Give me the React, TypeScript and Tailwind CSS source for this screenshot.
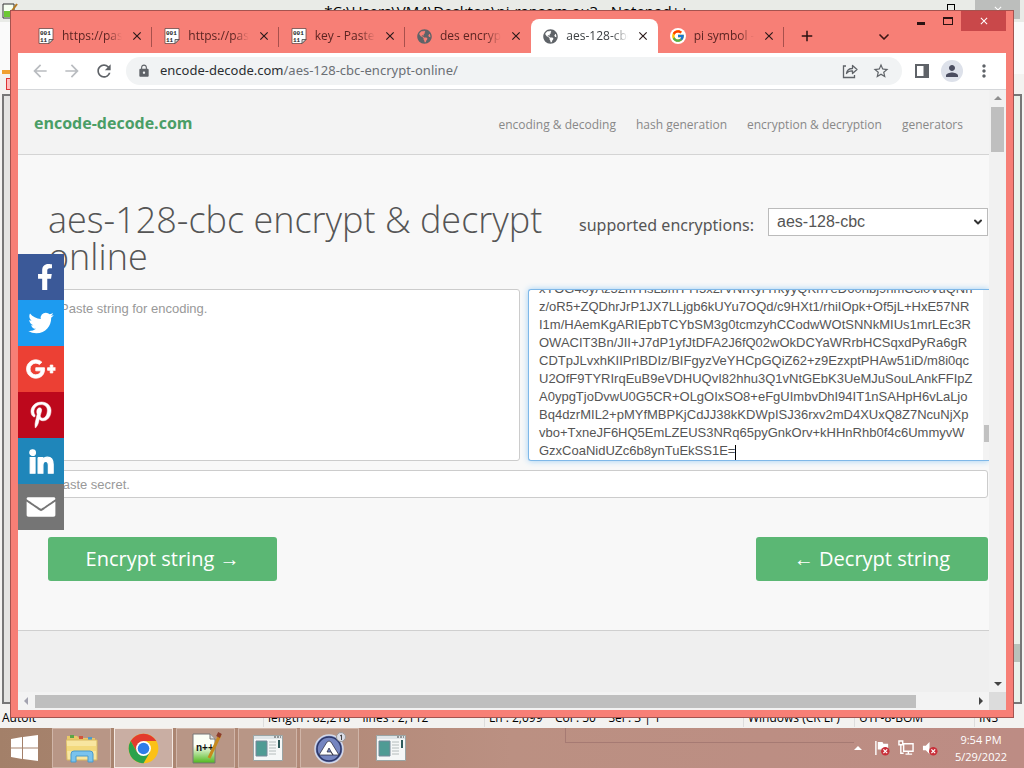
import { useEffect, useRef } from "react";
import type { ReactNode } from "react";
import { FaFacebookF, FaGlobeAmericas } from "react-icons/fa";
import { FcGoogle } from "react-icons/fc";
import { MdArrowBack, MdArrowForward, MdRefresh, MdLock, MdStarBorder, MdPerson, MdMoreVert, MdClose, MdAdd } from "react-icons/md";
import { ChevronDown } from "lucide-react";

const cipherText = [
    "xYOG40yAz52mYisLbmTYI5x2rVNrKyrTrkyyQKn7eD60nbj9nmCcl0VuQNn",
    "z/oR5+ZQDhrJrP1JX7LLjgb6kUYu7OQd/c9HXt1/rhiIOpk+Of5jL+HxE57NR",
    "I1m/HAemKgARIEpbTCYbSM3g0tcmzyhCCodwWOtSNNkMIUs1mrLEc3R",
    "OWACIT3Bn/JII+J7dP1yfJtDFA2J6fQ02wOkDCYaWRrbHCSqxdPyRa6gR",
    "CDTpJLvxhKIIPrIBDIz/BIFgyzVeYHCpGQiZ62+z9EzxptPHAw51iD/m8i0qc",
    "U2OfF9TYRIrqEuB9eVDHUQvI82hhu3Q1vNtGEbK3UeMJuSouLAnkFFIpZ",
    "A0ypgTjoDvwU0G5CR+OLgOIxSO8+eFgUImbvDhI94IT1nSAHpH6vLaLjo",
    "Bq4dzrMIL2+pMYfMBPKjCdJJ38kKDWpISJ36rxv2mD4XUxQ8Z7NcuNjXp",
    "vbo+TxneJF6HQ5EmLZEUS3NRq65pyGnkOrv+kHHnRhb0f4c6UmmyvW",
    "GzxCoaNidUZc6b8ynTuEkSS1E=",
].join("\n");

function BinaryIcon() {
    return (
        <svg viewBox="0 0 16 16" className="size-4 shrink-0">
            <path d="M1 .5h14v11l-4 4H1z" fill="#fff" stroke="#6b4a48" strokeWidth=".8" />
            <path d="M11 15.5v-4h4z" fill="#ddd" stroke="#444" strokeWidth=".8" />
            <text x="2" y="7" fontSize="6" fontWeight="bold" fontFamily="Liberation Mono, monospace" fill="#222">001</text>
            <text x="2" y="14" fontSize="6" fontWeight="bold" fontFamily="Liberation Mono, monospace" fill="#222">11</text>
        </svg>
    );
}

const globe = <FaGlobeAmericas className="size-[15px] shrink-0 text-[#5f6368]" />;

const tabs = [
    { title: "https://pastebin.com", icon: <BinaryIcon />, line: true },
    { title: "https://pastebin.com", icon: <BinaryIcon />, line: true },
    { title: "key - Pastebin.com", icon: <BinaryIcon />, line: true },
    { title: "des encrypt & decrypt", icon: globe },
    { title: "aes-128-cbc encrypt", icon: globe, active: true },
    {
        title: "pi symbol - Google",
        icon: (
            <span className="shrink-0 rounded-full bg-white p-px">
                <FcGoogle className="size-[14px]" />
            </span>
        ),
        line: true,
    },
];

function TabStrip() {
    return (
        <div className="flex h-[42px] shrink-0 items-end">
            <div className="ml-2 flex h-[34px] min-w-0 w-[758px]">
                {tabs.map((tab, i) => (
                    <div
                        key={i}
                        className={`relative flex min-w-0 flex-1 items-center pl-3 pr-2 ${tab.active ? "rounded-t-lg bg-white text-[#3c4043]" : "text-[#5c2422]"}`}
                    >
                        {tab.icon}
                        <span className="ml-2 flex-1 overflow-hidden whitespace-nowrap text-xs [mask-image:linear-gradient(to_right,black_75%,transparent)]">
                            {tab.title}
                        </span>
                        <button aria-label="Close tab" className="ml-2 text-[#2b1a1a]">
                            <MdClose className="size-[14px]" />
                        </button>
                        {tab.line && <span className="absolute right-0 top-2 h-5 w-px bg-[#a8504c]" />}
                    </div>
                ))}
            </div>
            <button aria-label="New tab" className="mb-2 ml-[14px] text-[#2b1212]">
                <MdAdd className="size-[18px]" />
            </button>
            <div className="flex-1" />
            <button aria-label="Search tabs" className="mb-2 mr-4 text-[#3c1614]">
                <ChevronDown className="size-4" strokeWidth={2.5} />
            </button>
            <div className="flex self-start">
                <button aria-label="Minimize" className="flex h-5 w-[26px] items-center justify-center pt-1">
                    <span className="h-[3px] w-2 bg-[#2b1212]" />
                </button>
                <button aria-label="Maximize" className="flex h-5 w-[27px] items-center justify-center">
                    <span className="h-2 w-[10px] border border-t-2 border-[#2b1212]" />
                </button>
                <button aria-label="Close" className="flex h-5 w-[45px] items-center justify-center bg-[#c9484a] text-white">
                    <MdClose className="size-3" />
                </button>
            </div>
        </div>
    );
}

function Toolbar() {
    return (
        <div className="flex h-[37px] shrink-0 items-center border-b border-[#d5d7da] bg-white text-[#5f6368]">
            <div className="ml-3 flex gap-3">
                <MdArrowBack className="size-5 text-[#b9bcc0]" />
                <MdArrowForward className="size-5 text-[#b9bcc0]" />
                <MdRefresh className="size-5" />
            </div>
            <div className="ml-3 flex h-[28px] flex-1 items-center rounded-full bg-[#f1f3f4] pl-[11px] pr-3">
                <MdLock className="size-[14px]" />
                <p className="ml-[9px] flex-1 font-['Noto_Sans',sans-serif] text-[13px] text-[#6b6f74]">
                    <span className="text-[#2b2e31]">encode-decode.com</span>/aes-128-cbc-encrypt-online/
                </p>
                <svg viewBox="0 0 16 16" className="mr-[14px] size-4" fill="none" stroke="currentColor" strokeWidth="1.3">
                    <path d="M4 3H1.500v11.500h11V12" />
                    <path d="M4.500 10.500c.5-3.500 2.500-5 6-5V2.500l4.500 4-4.500 4V7.800c-3-.2-4.600.7-6 2.700z" strokeLinejoin="round" />
                </svg>
                <MdStarBorder className="size-[18px]" />
            </div>
            <div className="mr-3 ml-3 flex items-center gap-[11px]">
                <svg viewBox="0 0 16 16" className="size-4">
                    <path d="M2 2h12v12H2z" fill="none" stroke="#5f6368" strokeWidth="2" />
                    <path d="M9.500 2H15v12H9.500z" fill="#5f6368" />
                </svg>
                <span className="flex size-[22px] items-center justify-center rounded-full bg-[#dde1ea]">
                    <MdPerson className="size-[18px] text-[#4a4d60]" />
                </span>
                <MdMoreVert className="size-5" />
            </div>
        </div>
    );
}

const shares = [
    { name: "Facebook", bg: "bg-[#3b5998]", icon: <FaFacebookF className="ml-2 size-[26px]" /> },
    {
        name: "Twitter",
        bg: "bg-[#1d9bf0]",
        icon: (
            <svg viewBox="0 0 32 32" className="size-[34px]" fill="currentColor">
                <path d="M28 8.557a9.913 9.913 0 0 1-2.828.775 4.930 4.930 0 0 0 2.166-2.725 9.738 9.738 0 0 1-3.130 1.194 4.920 4.920 0 0 0-3.593-1.550 4.924 4.924 0 0 0-4.794 6.049c-4.090-.21-7.720-2.170-10.150-5.150a4.942 4.942 0 0 0-.665 2.477c0 1.710.87 3.214 2.190 4.100a4.968 4.968 0 0 1-2.230-.616v.06c0 2.390 1.700 4.380 3.952 4.830-.414.115-.85.174-1.297.174-.318 0-.626-.03-.928-.086a4.935 4.935 0 0 0 4.600 3.420 9.893 9.893 0 0 1-6.114 2.107c-.398 0-.79-.023-1.175-.068a13.953 13.953 0 0 0 7.550 2.213c9.056 0 14.010-7.507 14.010-14.013 0-.213-.005-.426-.015-.637.96-.695 1.795-1.560 2.455-2.550z" />
            </svg>
        ),
    },
    {
        name: "Google+",
        bg: "bg-[#ec4034]",
        icon: (
            <svg viewBox="0 0 32 32" className="size-[42px]" fill="currentColor">
                <path d="M27 15h-2v-2h-2v2h-2v2h2v2h2v-2h2m-15-2v2.400h3.970c-.16 1.030-1.200 3.020-3.970 3.020-2.390 0-4.340-1.980-4.340-4.420s1.950-4.420 4.340-4.420c1.360 0 2.270.58 2.790 1.080l1.900-1.830C15.470 9.690 13.890 9 12 9c-3.870 0-7 3.130-7 7s3.130 7 7 7c4.040 0 6.720-2.840 6.720-6.840 0-.46-.05-.81-.11-1.160H12z" stroke="currentColor" strokeWidth=".6" />
            </svg>
        ),
    },
    {
        name: "Pinterest",
        bg: "bg-[#bd081c]",
        icon: (
            <svg viewBox="0 0 32 32" className="size-9" fill="currentColor">
                <path d="M16.539 4.500c-6.277 0-9.442 4.500-9.442 8.253 0 2.272.86 4.293 2.705 5.046.303.125.574.005.662-.33.061-.231.205-.816.27-1.060.088-.331.053-.447-.191-.736-.532-.627-.873-1.439-.873-2.591 0-3.338 2.498-6.327 6.505-6.327 3.548 0 5.497 2.168 5.497 5.062 0 3.810-1.686 7.025-4.188 7.025-1.382 0-2.416-1.142-2.085-2.545.397-1.674 1.166-3.480 1.166-4.689 0-1.081-.581-1.983-1.782-1.983-1.413 0-2.548 1.462-2.548 3.419 0 1.247.421 2.091.421 2.091l-1.699 7.199c-.505 2.137-.076 4.755-.039 5.019.021.158.223.196.314.077.13-.17 1.813-2.247 2.384-4.324.162-.587.929-3.631.929-3.631.46.876 1.801 1.646 3.227 1.646 4.247 0 7.128-3.871 7.128-9.053.003-3.918-3.317-7.568-8.361-7.568z" stroke="currentColor" strokeWidth=".5" />
            </svg>
        ),
    },
    {
        name: "LinkedIn",
        bg: "bg-[#1f86ba]",
        icon: (
            <svg viewBox="0 0 32 32" className="size-[37px]" fill="currentColor">
                <path d="M6.227 12.610h4.190v13.480h-4.190V12.610zm2.095-6.700a2.430 2.430 0 0 1 0 4.860c-1.344 0-2.428-1.090-2.428-2.430s1.084-2.430 2.428-2.430m4.720 6.700h4.020v1.840h.058c.56-1.058 1.927-2.176 3.965-2.176 4.238 0 5.020 2.792 5.020 6.420v7.395h-4.183v-6.560c0-1.564-.03-3.574-2.178-3.574-2.180 0-2.514 1.700-2.514 3.460v6.668h-4.187V12.610z" stroke="currentColor" />
            </svg>
        ),
    },
    {
        name: "Email",
        bg: "bg-[#757575]",
        icon: (
            <svg viewBox="0 0 32 32" className="size-[46px]" fill="currentColor">
                <path d="M26 21.250v-9s-9.100 6.350-9.984 6.680C15.144 18.616 6 12.250 6 12.250v9c0 1.250.266 1.500 1.500 1.500h17c1.266 0 1.500-.22 1.500-1.500zm-.015-10.765c0-.91-.265-1.235-1.485-1.235h-17c-1.255 0-1.500.39-1.500 1.300l.015.14s9.035 6.220 10 6.560c1.020-.395 9.985-6.700 9.985-6.700l-.015-.065z" />
            </svg>
        ),
    },
];

function Page() {
    const output = useRef<HTMLTextAreaElement>(null);

    // the decoded box is scrolled down to its last line
    useEffect(() => {
        if (output.current) output.current.scrollTop = output.current.scrollHeight;
    }, []);

    return (
        <div className="relative flex min-w-0 flex-1 flex-col overflow-hidden bg-[#efefef] font-['Open_Sans',sans-serif] text-[#555]">
            <header className="flex h-[65px] shrink-0 items-center justify-between border-b border-[#d4d4d4] bg-[#f3f3f3] pl-4 pr-[26px] pt-[2px]">
                <a href="#" className="text-base font-bold text-[#4a9e66]">encode-decode.com</a>
                <nav className="flex gap-5 pt-1 text-xs text-[#888]">
                    <a href="#">encoding &amp; decoding</a>
                    <a href="#">hash generation</a>
                    <a href="#">encryption &amp; decryption</a>
                    <a href="#">generators</a>
                </nav>
            </header>

            <main className="shrink-0 border-b border-[#cfcfcf] bg-[#f8f8f8] pb-[49px] pl-[30px] pt-[46px]">
                <div className="flex items-start pr-px">
                    <h1 className="flex-1 text-[36px] font-[350] leading-[37px] text-[#555]">
                        aes-128-cbc encrypt &amp; decrypt online
                    </h1>
                    <div className="flex items-center pt-[6px]">
                        <label htmlFor="cipher" className="mr-[14px] pt-[6px] font-['Noto_Sans',sans-serif] text-base">supported encryptions:</label>
                        <div className="relative">
                            <select id="cipher" className="block h-7 w-[220px] appearance-none border border-[#bbb] bg-white pl-2 font-['Liberation_Sans',sans-serif] text-base text-[#555]">
                                <option>aes-128-cbc</option>
                            </select>
                            <ChevronDown className="pointer-events-none absolute right-1 top-2 size-3 text-[#333]" strokeWidth={4} />
                        </div>
                    </div>
                </div>

                <div className="mt-[14px] flex gap-2 font-['Liberation_Sans',sans-serif] text-[13px] leading-[18px]">
                    <textarea
                        aria-label="String for encoding"
                        placeholder="Paste string for encoding."
                        className="h-[172px] min-w-0 flex-1 resize-none rounded-[3px] border border-[#ccc] bg-white px-[11px] py-[10px] placeholder:text-[#999]"
                    />
                    <div className="relative flex h-[172px] w-[461px] shrink-0 rounded-l-[3px] border border-r-0 border-[#7fb8e8] bg-white shadow-[0_0_6px_#9fd0f5]">
                        <textarea
                            ref={output}
                            aria-label="String for decoding"
                            defaultValue={cipherText}
                            wrap="off"
                            className="min-w-0 flex-1 resize-none overflow-hidden pl-[10px] text-[#555] outline-none"
                        />
                        <span className="absolute bottom-0 left-[206px] h-[15px] w-px bg-black" />
                        <div className="flex w-[6px] flex-col items-end justify-end bg-[#f3f3f3] pb-[18px]">
                            <span className="h-[17px] w-[5px] bg-[#c1c1c1]" />
                        </div>
                    </div>
                </div>

                <input
                    aria-label="Secret"
                    placeholder="Paste secret."
                    className="mt-[9px] block h-7 w-[calc(100%-1px)] rounded-[3px] border border-[#ccc] bg-white px-[5px] font-['Liberation_Sans',sans-serif] text-[13px] placeholder:text-[#999]"
                />

                <div className="mt-[39px] flex justify-between pr-px text-xl text-white">
                    <button className="h-11 w-[229px] rounded-[3px] bg-[#5bb774]">
                        Encrypt string <span className="font-['Liberation_Sans',sans-serif]">→</span>
                    </button>
                    <button className="h-11 w-[232px] rounded-[3px] bg-[#5bb774]">
                        <span className="font-['Liberation_Sans',sans-serif]">←</span> Decrypt string
                    </button>
                </div>
            </main>

            <div className="absolute left-0 top-[164px] flex flex-col text-white">
                {shares.map((share) => (
                    <a key={share.name} href="#" aria-label={share.name} className={`flex size-[46px] items-center justify-center ${share.bg}`}>
                        {share.icon}
                    </a>
                ))}
            </div>
        </div>
    );
}

function ChromeWindow() {
    return (
        <div className="absolute inset-x-[10px] bottom-[50px] top-[10px] flex flex-col border border-[#a5534f] bg-[#f77f76] px-[7px] pb-[7px]">
            <TabStrip />
            <Toolbar />
            <div className="flex min-h-0 flex-1">
                <Page />
                <div className="flex w-[17px] flex-col items-center justify-between bg-[#f1f1f1] py-[6px]">
                    <div className="flex flex-col items-center">
                        <span className="border-x-4 border-b-4 border-x-transparent border-b-[#8f8f8f]" />
                        <span className="mt-[7px] h-[45px] w-[13px] bg-[#bfbfbf]" />
                    </div>
                    <span className="border-x-4 border-t-4 border-x-transparent border-t-[#444]" />
                </div>
            </div>
            <div className="flex h-[18px] shrink-0 items-center bg-[#f3f3f3] pl-[6px]">
                <span className="border-y-4 border-r-4 border-y-transparent border-r-[#a3a3b0]" />
                <div className="mx-[7px] flex-1">
                    <div className="h-[13px] w-[94%] bg-[#bfbfbf]" />
                </div>
                <span className="mr-[6px] border-y-4 border-l-4 border-y-transparent border-l-[#444]" />
                <span className="h-full w-[17px] bg-[#dcdcdc]" />
            </div>
        </div>
    );
}

// Notepad++ sits behind the browser, only its edges stay visible
function NotepadWindow() {
    return (
        <div className="flex min-h-0 flex-1 flex-col bg-[#f3f2f0] text-black">
            <div className="flex h-[22px] shrink-0 items-start bg-[#e9ebe7]">
                <svg viewBox="0 0 16 16" className="ml-[2px] mt-[3px] size-4">
                    <path d="M1 1h11v14H1z" fill="#f6fff0" stroke="#333" />
                    <path d="M2 8h9v6H2z" fill="#6cc832" />
                    <path d="M15 1 9 9" stroke="#b57b22" strokeWidth="2" />
                </svg>
                <span className="flex-1 pl-12 text-center text-[15px] leading-[22px]">
                    *C:\Users\VM4\Desktop\pi-ransom.au3 - Notepad++
                </span>
                <span className="mr-5 mt-1 size-2 border border-black" />
                <span className="mr-1 flex h-[19px] w-[45px] items-center justify-center bg-[#bcbebc] text-white">
                    <MdClose className="size-3" />
                </span>
            </div>
            <div className="flex h-[52px] shrink-0 items-end bg-[#fafafa] pl-[2px]">
                <span className="h-1 w-5 bg-[#f0a030]" />
            </div>
            <div className="flex h-5 shrink-0 items-center bg-[#f3f2f0] pl-[6px]">
                <span className="h-3 w-2 border border-[#d33] bg-[#fbb]" />
            </div>
            <div className="mx-[2px] flex flex-1 justify-end border-2 border-[#777] bg-[#e4e4e2]">
                <div className="flex w-2 flex-col justify-end bg-[#eaf1ea] pb-10">
                    <span className="h-[18px] bg-[#b9c2ba]" />
                </div>
            </div>
            <div className="flex h-6 shrink-0 items-end whitespace-nowrap pb-px text-xs leading-[18px]">
                <span className="flex-1 pl-[2px]">AutoIt</span>
                <span className="w-[221px] whitespace-pre border-l border-[#ddd] pl-1">length : 82,218    lines : 2,112</span>
                <span className="w-[259px] whitespace-pre border-l border-[#ddd] pl-1">Ln : 2,099    Col : 50    Sel : 3 | 1</span>
                <span className="w-[111px] border-l border-[#ddd] pl-1">Windows (CR LF)</span>
                <span className="w-[120px] border-l border-[#ddd] pl-1">UTF-8-BOM</span>
                <span className="w-[50px] border-l border-[#ddd] pl-1">INS</span>
            </div>
        </div>
    );
}

function FolderIcon() {
    return (
        <svg viewBox="0 0 32 30" className="h-[30px] w-8">
            <path d="M1 3h10l2 2h16v6H1z" fill="#e9c968" />
            <path d="M4 2h4v3H4z" fill="#5aa548" />
            <path d="M13 3h4v3h-4z" fill="#d2553c" />
            <path d="M22 4h4v3h-4z" fill="#4b9acb" />
            <path d="M0 7h31v20H1z" fill="#f8e6a0" stroke="#d9b860" />
            <path d="M1 13h29v5H1z" fill="#f3d97c" />
            <path d="M5 29V21q0-3 3-3h16q3 0 3 3v8h-5v-6H10v6z" fill="#79c3ee" stroke="#4b9acb" />
        </svg>
    );
}

function ChromeIcon() {
    return (
        <svg viewBox="0 0 48 48" className="size-[31px]">
            <circle cx="24" cy="24" r="23" fill="#fbc116" />
            <path d="M4.100 12.500A23 23 0 0 1 43.900 12.500H24L14 29.700z" fill="#e33b2e" />
            <path d="M4.100 12.500A23 23 0 0 0 24 47l10-17.300H14z" fill="#2ba24c" />
            <circle cx="24" cy="24" r="11.500" fill="#fff" />
            <circle cx="24" cy="24" r="9" fill="#2f7de9" />
        </svg>
    );
}

function NotepadIcon() {
    return (
        <svg viewBox="0 0 32 32" className="size-8">
            <defs>
                <linearGradient id="sheet" x1="0" y1="0" x2="0" y2="1">
                    <stop offset=".4" stopColor="#fbfff6" />
                    <stop offset="1" stopColor="#4fb81c" />
                </linearGradient>
            </defs>
            <path d="M3 2h17l5 5v24H3z" fill="url(#sheet)" stroke="#777" />
            <path d="M20 2v5h5" fill="#ddd" stroke="#777" />
            <text x="6" y="19" fontSize="10" fontWeight="bold" fontFamily="Liberation Sans, sans-serif" fill="#111">n++</text>
            <path d="M30 3 19 26" stroke="#c68a1d" strokeWidth="3" />
            <path d="m28 5 2-4" stroke="#8b3c2c" strokeWidth="4" />
        </svg>
    );
}

function ProgramIcon() {
    return (
        <svg viewBox="0 0 30 26" className="h-[26px] w-[30px]">
            <path d="M.5.5h29v25H.5z" fill="#f5f7f7" stroke="#9aa5a5" />
            <path d="M1 1h28v3H1z" fill="#dfe5e8" />
            <path d="M21 2h2m1 0h2m1 0h1" stroke="#444" />
            <path d="M3 6h11v15H3z" fill="#4f9b94" stroke="#789" />
            <path d="M16 7h7M16 10h7M16 13h7M16 16h7M16 19h7" stroke="#b4bcbc" />
            <path d="M26 5v8" stroke="#2e5b5b" strokeWidth="2" />
        </svg>
    );
}

function AutoItIcon() {
    return (
        <svg viewBox="0 0 32 32" className="size-8">
            <circle cx="15" cy="17" r="14" fill="#7585c0" stroke="#d3d8e8" strokeWidth="1.500" />
            <circle cx="15" cy="17" r="12" fill="none" stroke="#2c3768" strokeWidth="1.500" />
            <path d="M5 23 13 10q2-2 4 0l8 13h-6l-4-7-2 4h4l2 3z" fill="#fff" stroke="#223" strokeWidth=".7" />
            <circle cx="27" cy="5" r="4.500" fill="#dadce6" stroke="#999" />
            <path d="M26 4l1.500-1v5" fill="none" stroke="#444" />
        </svg>
    );
}

function TaskButton({ label, active, children }: { label: string; active?: boolean; children: ReactNode }) {
    return (
        <button
            aria-label={label}
            className={`flex h-full w-[59px] items-center justify-center border ${active ? "border-[#f3e8e2] bg-[#c9aea3]" : "border-[#d0b5a8] bg-[#b89686]"}`}
        >
            {children}
        </button>
    );
}

function RedCross() {
    return (
        <g>
            <circle cx="12" cy="12" r="4.500" fill="#c9303a" />
            <path d="m10 10 4 4m0-4-4 4" stroke="#fff" strokeWidth="1.300" />
        </g>
    );
}

function Taskbar() {
    return (
        <div className="flex h-10 shrink-0 items-center bg-linear-to-r from-[#a38069] via-[#bb9082] to-[#bd8c84] text-white">
            <button aria-label="Start" className="flex w-[52px] shrink-0 justify-center pr-1">
                <svg viewBox="0 0 27 26" className="h-[26px] w-[27px]" fill="#fff">
                    <path d="M0 4 11 2v10.500H0zM12 2 27 0v12.500H12zM0 13.500h11V24L0 22zM12 13.500h15V26l-15-2z" />
                </svg>
            </button>
            <div className="flex h-full gap-[3px]">
                <TaskButton label="File Explorer"><FolderIcon /></TaskButton>
                <TaskButton label="Chrome" active><ChromeIcon /></TaskButton>
                <TaskButton label="Notepad++"><NotepadIcon /></TaskButton>
                <TaskButton label="Program"><ProgramIcon /></TaskButton>
                <TaskButton label="AutoIt"><AutoItIcon /></TaskButton>
            </div>
            <button aria-label="Program" className="ml-[14px] flex w-[35px] justify-center">
                <ProgramIcon />
            </button>
            <div className="ml-[157px] h-[15px] flex-1 self-start border-b border-l border-[#a67a73]" />
            <div className="flex items-center gap-2 pr-4">
                <span className="mr-1 border-x-4 border-b-4 border-x-transparent border-b-white" />
                <svg viewBox="0 0 17 17" className="size-4" fill="none">
                    <path d="M2 1v15" stroke="#fff" strokeWidth="1.500" />
                    <path d="M4 2h5l1 2h5v6H4z" fill="#fff" />
                    <RedCross />
                </svg>
                <svg viewBox="0 0 17 17" className="size-4" fill="none" stroke="#fff" strokeWidth="1.500">
                    <path d="M6 4h10v8H6zM8 15h7M11 12v3M1 1h4v4H1zM3 5v9h3" />
                </svg>
                <svg viewBox="0 0 17 17" className="size-4" fill="none">
                    <path d="M1 6h3l4-4v13l-4-4H1z" fill="#fff" />
                    <RedCross />
                </svg>
                <div className="ml-2 w-[54px] whitespace-nowrap text-center text-[11px] leading-[17px]">
                    <div>9:54 PM</div>
                    <div>5/29/2022</div>
                </div>
            </div>
        </div>
    );
}

export default function App() {
    return (
        <div className="relative flex h-screen flex-col overflow-hidden font-['Open_Sans',sans-serif]">
            <NotepadWindow />
            <Taskbar />
            <ChromeWindow />
        </div>
    );
}
